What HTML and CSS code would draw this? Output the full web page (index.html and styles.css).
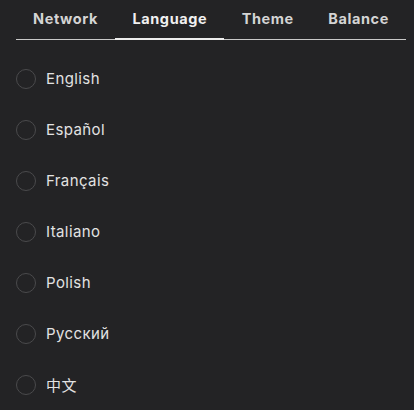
FILE: index.html
```html
<!DOCTYPE html>
<html lang="en">
<head>
    <meta charset="UTF-8">
    <meta name="viewport" content="width=device-width, initial-scale=1.0">
    <title>Settings - Language</title>
    <link rel="stylesheet" href="styles.css">
</head>
<body>

<div class="settings">
    <nav class="tabs">
        <button class="tab">Network</button>
        <button class="tab active">Language</button>
        <button class="tab">Theme</button>
        <button class="tab">Balance</button>
    </nav>

    <ul class="lang-list">
        <li class="lang-item"><span class="radio"></span><span>English</span></li>
        <li class="lang-item"><span class="radio"></span><span>Español</span></li>
        <li class="lang-item"><span class="radio"></span><span>Français</span></li>
        <li class="lang-item"><span class="radio"></span><span>Italiano</span></li>
        <li class="lang-item"><span class="radio"></span><span>Polish</span></li>
        <li class="lang-item"><span class="radio"></span><span>Русский</span></li>
        <li class="lang-item"><span class="radio"></span><span lang="zh">中文</span></li>
    </ul>
</div>

</body>
</html>
```

FILE: styles.css
```css
/* General Styles */
* {
    box-sizing: border-box;
    margin: 0;
    padding: 0;
}

body {
    font-family: Inter, "Noto Sans CJK SC", sans-serif;
    background-color: #232325;
    color: #e2e2e2;
}

.settings {
    padding: 0 8px 0 16px;
}

/* Tabs */
.tabs {
    display: flex;
    justify-content: space-between;
    border-bottom: 1px solid #c8c8c8;
}

.tab {
    background: none;
    border: none;
    border-bottom: 2px solid transparent;
    margin-bottom: -1px;
    padding: 0 17px;
    height: 40px;
    line-height: 38px;
    font-family: inherit;
    font-size: 14.5px;
    font-weight: bold;
    letter-spacing: 0.6px;
    color: #d4d4d4;
    cursor: pointer;
}

.tab.active {
    color: #f0f0f0;
    border-bottom-color: #ececec;
}

/* Language list */
.lang-list {
    list-style-type: none;
    padding-top: 13px;
}

.lang-item {
    display: flex;
    align-items: center;
    gap: 10px;
    height: 51px;
    font-size: 15px;
    letter-spacing: 0.4px;
    cursor: pointer;
}

.lang-item .radio {
    width: 20px;
    height: 20px;
    border: 1.5px solid #4a4a4c;
    border-radius: 50%;
}
```
